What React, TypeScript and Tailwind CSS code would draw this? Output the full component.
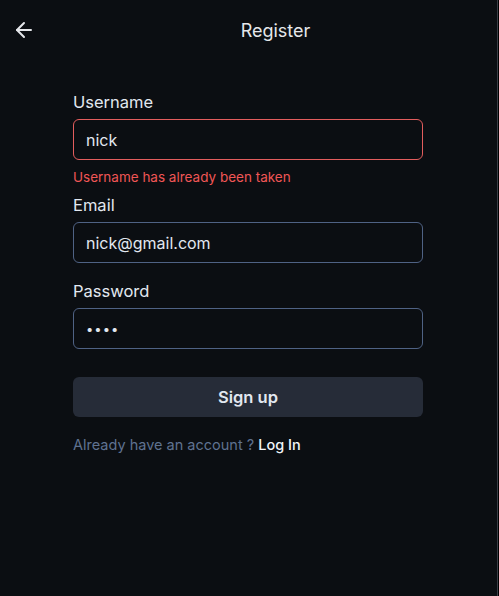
import React, { useState } from 'react';
import { ArrowLeft } from 'lucide-react';

const inputBase =
  'w-full h-[41px] rounded-md bg-transparent px-3 text-[#e2e8f0] outline-none border';

const labelCls = 'text-[16.5px] leading-6 font-normal text-[#e2e8f0] mb-[5px]';

export default function App() {
  const [username, setUsername] = useState('nick');
  const [email, setEmail] = useState('nick@gmail.com');
  const [password, setPassword] = useState('1234');

  return (
    <div className="w-[499px] h-[596px] bg-black font-['Inter',sans-serif]">
      <div className="w-[498px] h-full bg-[#0b0e12] border-r border-[#3a3f47] flex flex-col">
        {/* Header */}
        <div className="h-[60px] flex items-center">
          <button className="w-[48px] h-full flex items-center justify-center text-[#e5e7eb]">
            <ArrowLeft size={24} strokeWidth={2} />
          </button>
          <div className="flex-1 text-center text-[18px] text-[#e5e7eb] pl-[6px]">Register</div>
        </div>

        {/* Form */}
        <div className="w-[350px] ml-[73px] mt-[30px] flex flex-col">
          <label className={labelCls}>Username</label>
          <input
            value={username}
            onChange={(e) => setUsername(e.target.value)}
            className={`${inputBase} text-[16px] border-[#e35d5d]`}
          />
          <div className="mt-[7px] text-[13.5px] leading-5 text-[#f05656]">
            Username has already been taken
          </div>

          <label className={`mt-[6px] ${labelCls}`}>Email</label>
          <input
            value={email}
            onChange={(e) => setEmail(e.target.value)}
            className={`${inputBase} text-[16px] border-[#4f6284]`}
          />

          <label className={`mt-[16px] ${labelCls}`}>Password</label>
          <input
            type="password"
            value={password}
            onChange={(e) => setPassword(e.target.value)}
            className={`${inputBase} text-[13px] tracking-[1px] border-[#4f6284]`}
          />

          <button className="mt-[28px] h-[40px] rounded-md bg-[#262c38] text-[16.5px] font-semibold text-[#e2e8f0]">
            Sign up
          </button>

          <div className="mt-[18px] text-[14.5px] leading-5">
            <span className="text-[#5f7290]">Already have an account ? </span>
            <a className="font-medium text-[#f1f5f9] cursor-pointer">Log In</a>
          </div>
        </div>
      </div>
    </div>
  );
}
